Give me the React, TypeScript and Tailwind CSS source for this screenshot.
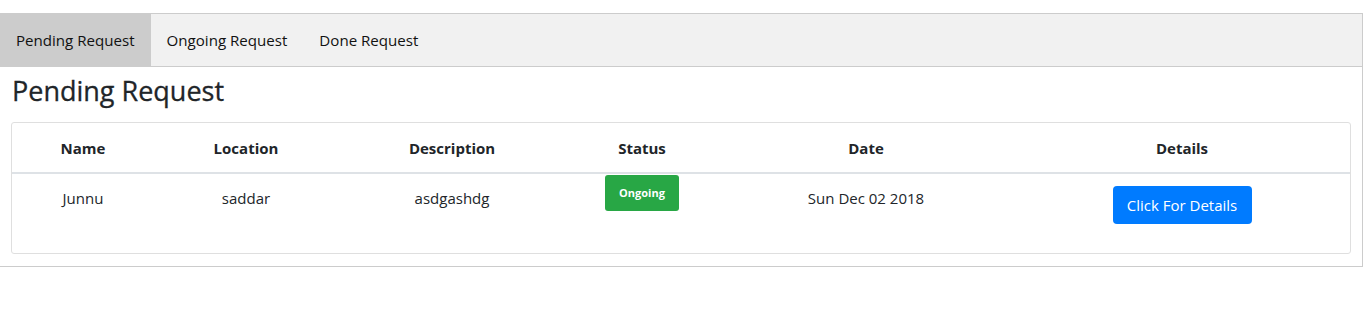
import React, { useState } from 'react';

const tabs = ['Pending Request', 'Ongoing Request', 'Done Request'];

const columns = [
  { label: 'Name', w: 'w-[142px]' },
  { label: 'Location', w: 'w-[184px]' },
  { label: 'Description', w: 'w-[228px]' },
  { label: 'Status', w: 'w-[152px]' },
  { label: 'Date', w: 'w-[296px]' },
  { label: 'Details', w: 'flex-1' },
];

export default function App() {
  const [active, setActive] = useState('Pending Request');

  return (
    <div className="bg-white h-[317px] pt-[13px]" style={{ fontFamily: '"Open Sans", "Noto Sans", sans-serif' }}>
      <div className="w-[1363px] border border-[#cccccc] border-l-0">
        <div className="flex h-[53px] bg-[#f1f1f1] border-b border-[#cccccc]">
          {tabs.map(t => (
            <button
              key={t}
              onClick={() => setActive(t)}
              className={`px-4 whitespace-nowrap text-[15.1px] text-[#111] ${active === t ? 'bg-[#cccccc]' : ''}`}
            >
              {t}
            </button>
          ))}
        </div>

        <div className="px-[11px] pb-[12px]">
          <h3 className="text-[27px] font-medium text-[#212529] leading-[36px] pt-[6px] pb-[13px] pl-px [-webkit-text-stroke:0.3px_#212529]">{active}</h3>

          <div className="border border-[#dfdfdf] rounded-[3px] h-[132px] text-[15px] text-[#212529]">
            <div className="flex h-[51px] border-b-2 border-[#dee2e6]">
              {columns.map(c => (
                <div key={c.label} className={`${c.w} flex items-center justify-center font-bold pt-[2px]`}>
                  {c.label}
                </div>
              ))}
            </div>
            <div className="flex">
              <div className="w-[142px] text-center pt-[12px] leading-6">Junnu</div>
              <div className="w-[184px] text-center pt-[12px] leading-6">saddar</div>
              <div className="w-[228px] text-center pt-[12px] leading-6">asdgashdg</div>
              <div className="w-[152px] flex justify-center pt-px">
                <span className="w-[74px] h-[36px] bg-[#28a745] text-white text-[11px] font-bold rounded-[3px] flex items-center justify-center">
                  Ongoing
                </span>
              </div>
              <div className="w-[296px] text-center pt-[12px] leading-6">Sun Dec 02 2018</div>
              <div className="flex-1 flex justify-center pt-[12px]">
                <button className="w-[139px] h-[38px] bg-[#007bff] text-white text-[15px] rounded-[4px]">
                  Click For Details
                </button>
              </div>
            </div>
          </div>
        </div>
      </div>
    </div>
  );
}
